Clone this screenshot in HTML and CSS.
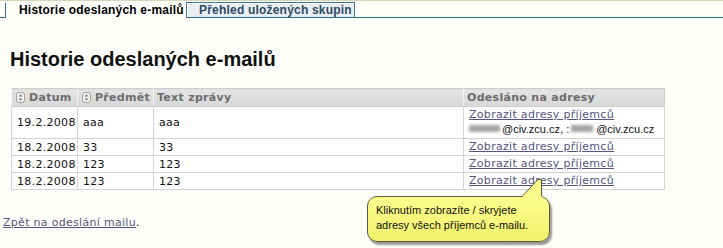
FILE: index.html
```html
<!DOCTYPE html>
<html lang="cs">
<head>
    <meta charset="UTF-8">
    <title>Historie odeslaných e-mailů</title>
    <link rel="stylesheet" href="styles.css">
</head>
<body>
    <div class="tabs">
        <a class="tab tab-active" href="#">Historie odeslaných e-mailů</a>
        <a class="tab" href="#">Přehled uložených skupin</a>
    </div>

    <h1>Historie odeslaných e-mailů</h1>

    <table class="history">
        <colgroup>
            <col class="c-date">
            <col class="c-subject">
            <col class="c-text">
            <col class="c-to">
        </colgroup>
        <thead>
            <tr>
                <th><span class="sort"><svg width="9" height="11" viewBox="0 0 9 11"><rect x="0.5" y="0.5" width="8" height="10" rx="2.5" fill="#f3f3f3" stroke="#a0a0a0"/><path d="M2.5 4.5 L4.5 2.3 L6.5 4.5 Z M2.5 6.5 L4.5 8.7 L6.5 6.5 Z" fill="#7a7a7a"/></svg></span>Datum</th>
                <th><span class="sort"><svg width="9" height="11" viewBox="0 0 9 11"><rect x="0.5" y="0.5" width="8" height="10" rx="2.5" fill="#f3f3f3" stroke="#a0a0a0"/><path d="M2.5 4.5 L4.5 2.3 L6.5 4.5 Z M2.5 6.5 L4.5 8.7 L6.5 6.5 Z" fill="#7a7a7a"/></svg></span>Předmět</th>
                <th>Text zprávy</th>
                <th>Odesláno na adresy</th>
            </tr>
        </thead>
        <tbody>
            <tr class="tall">
                <td>19.2.2008</td>
                <td>aaa</td>
                <td>aaa</td>
                <td>
                    <a href="#">Zobrazit adresy příjemců</a><br>
                    <span class="emails"><span class="blur b1"></span>@civ.zcu.cz, :<span class="blur b2"></span>@civ.zcu.cz</span>
                </td>
            </tr>
            <tr>
                <td>18.2.2008</td>
                <td>33</td>
                <td>33</td>
                <td><a href="#">Zobrazit adresy příjemců</a></td>
            </tr>
            <tr>
                <td>18.2.2008</td>
                <td>123</td>
                <td>123</td>
                <td><a href="#">Zobrazit adresy příjemců</a></td>
            </tr>
            <tr>
                <td>18.2.2008</td>
                <td>123</td>
                <td>123</td>
                <td><a href="#">Zobrazit adresy příjemců</a></td>
            </tr>
        </tbody>
    </table>

    <p class="back"><a href="#">Zpět na odeslání mailu</a>.</p>

    <div class="tooltip">
        <svg class="tail" width="24" height="19" viewBox="0 0 24 19">
            <polygon points="0,19 17,0.5 21,0.5 21,19" fill="#fcfc8a"/>
            <polyline points="0.5,18 17,0.5 20.5,0.5 20.5,17" fill="none" stroke="#5c5c3e"/>
        </svg>
        Kliknutím zobrazíte / skryjete<br>
        adresy všech příjemců e-mailu.
    </div>
</body>
</html>
```

FILE: styles.css
```css
body {
    margin: 0;
    background: #fdfefa;
    color: #111;
    font-family: "DejaVu Sans", Verdana, sans-serif;
    font-size: 11px;
}

a {
    color: #55557f;
}

/* zalozky nahore */
.tabs {
    display: flex;
    align-items: flex-end;
    height: 16px;
    padding-left: 5px;
    border-top: 1px solid #d6d6b8;
    border-bottom: 1px solid #2f6c86;
    background: #fbfdf6;
}

.tab {
    box-sizing: border-box;
    height: 15px;
    font: bold 12px/14px "Liberation Sans", Arial, sans-serif;
    letter-spacing: 0.2px;
    text-decoration: none;
    color: #2d4a66;
    width: 169px;
    padding-left: 12px;
    border: 1px solid #3c7891;
    border-bottom: none;
    background: #e8eef2;
    box-shadow: inset 1px 1px 0 #ffffff;
}

.tab-active {
    width: 181px;
    height: 15px;
    margin-bottom: -1px;
    padding-left: 13px;
    color: #000;
    line-height: 15px;
    border: none;
    border-left: 1px solid #2f6c86;
    background: #fdfefa;
    box-shadow: none;
}

h1 {
    margin: 30px 0 0 10px;
    font: bold 20px/23px "Liberation Sans", Arial, sans-serif;
    color: #111;
}

/* tabulka historie */
.history {
    margin: 17px 0 0 11px;
    width: 653px;
    table-layout: fixed;
    border-collapse: collapse;
    border: 1px solid #cdcdcd;
    background: #fff;
    letter-spacing: 0.3px;
}

.c-date { width: 66px; }
.c-subject { width: 76px; }
.c-text { width: 310px; }
.c-to { width: 201px; }

.history th {
    height: 17px;
    padding: 0 3px;
    text-align: left;
    white-space: nowrap;
    color: #6c6c6c;
    font-weight: bold;
    background: linear-gradient(#e4e4e4, #d8d8d8);
    border-left: 1px solid #f4f4f4;
    border-bottom: 1px solid #cdcdcd;
}

.sort {
    display: inline-block;
    vertical-align: -2px;
    margin: 0 4px 0 1px;
}

.sort svg {
    display: block;
}

.history td {
    height: 16px;
    padding: 0 5px;
    white-space: nowrap;
    border: 1px solid #d4d4d4;
    vertical-align: middle;
}

.history tr.tall td {
    height: 31px;
}

.history td:last-child {
    padding-left: 5px;
    line-height: 14px;
}

.emails {
    font: 11px/14px "Liberation Sans", Arial, sans-serif;
    letter-spacing: 0;
    color: #111;
}

.blur {
    display: inline-block;
    height: 7px;
    vertical-align: 1px;
    background: #a4a4a4;
    filter: blur(1.4px);
}

.b1 { width: 31px; margin-right: 2px; }
.b2 { width: 22px; margin: 0 3px 0 2px; }

.back {
    margin: 26px 0 0 3px;
    line-height: 14px;
    letter-spacing: 0.3px;
}

/* bublina s napovedou */
.tooltip {
    position: absolute;
    left: 367px;
    top: 196px;
    box-sizing: border-box;
    width: 183px;
    height: 46px;
    padding: 6px 0 0 8px;
    border: 1px solid #5c5c3e;
    border-radius: 10px;
    background: linear-gradient(#fdfd8e, #f1f16c);
    box-shadow: 2px 3px 2px rgba(0, 0, 0, 0.4);
    font: 11px/15px "Liberation Sans", Arial, sans-serif;
    color: #111;
}

.tail {
    position: absolute;
    left: 153px;
    top: -18px;
}
```
